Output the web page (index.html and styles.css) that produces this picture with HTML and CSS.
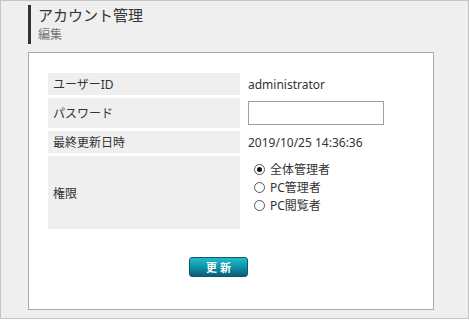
FILE: index.html
```html
<!DOCTYPE html>
<html lang="ja">
<head>
  <meta charset="UTF-8" />
  <meta name="viewport" content="width=device-width, initial-scale=1.0" />
  <title>アカウント管理</title>
  <link rel="stylesheet" href="styles.css">
</head>
<body>
  <div class="frame">
    <div class="page-head">
      <div class="page-title">アカウント管理</div>
      <div class="page-sub">編集</div>
    </div>

    <div class="panel">
      <form class="account-form" onsubmit="return false;">
        <div class="form-grid">
          <div class="label h-sm">ユーザーID</div>
          <div class="value">administrator</div>

          <div class="label h-md">パスワード</div>
          <div class="value"><input type="password" class="text-input"></div>

          <div class="label h-sm">最終更新日時</div>
          <div class="value">2019/10/25 14:36:36</div>

          <div class="label h-lg">権限</div>
          <div class="value radios">
            <label class="radio"><input type="radio" name="role" checked> 全体管理者</label>
            <label class="radio"><input type="radio" name="role"> PC管理者</label>
            <label class="radio"><input type="radio" name="role"> PC閲覧者</label>
          </div>
        </div>
        <div class="actions">
          <button class="btn-update" type="submit">更新</button>
        </div>
      </form>
    </div>
  </div>
</body>
</html>
```

FILE: styles.css
```css
body {
  margin: 0;
  font-family: "Noto Sans", "Noto Sans CJK JP", sans-serif;
  font-size: 12px;
  color: #333;
  background: #fff;
}
.frame {
  width: 469px;
  height: 319px;
  box-sizing: border-box;
  border: 1px solid #c4c4c4;
  background: #efefef;
  padding: 4px 0 0 27px;
}
.page-head {
  border-left: 3px solid #333;
  padding-left: 7px;
  height: 39px;
}
.page-title {
  font-size: 15px;
  line-height: 21px;
  color: #333;
}
.page-sub {
  font-size: 12px;
  line-height: 18px;
  color: #777;
}
.panel {
  margin-top: 8px;
  width: 406px;
  height: 258px;
  box-sizing: border-box;
  border: 1px solid #aaa;
  background: #fff;
  padding: 20px 0 0 19px;
}
.account-form {
  width: 337px;
}
.form-grid {
  display: grid;
  grid-template-columns: 192px 1fr;
  column-gap: 8px;
  row-gap: 3px;
}
.label {
  background: #efefef;
  display: flex;
  align-items: center;
  padding-left: 5px;
  color: #333;
}
.h-sm { height: 22px; }
.h-md { height: 30px; }
.h-lg { height: 73px; }
.value {
  display: flex;
  align-items: center;
}
.text-input {
  width: 136px;
  height: 24px;
  box-sizing: border-box;
  border: 1px solid #a0a0a0;
  padding: 2px 4px;
  margin: 0;
}
.radios {
  flex-direction: column;
  align-items: flex-start;
  justify-content: flex-start;
  padding-top: 4px;
}
.radio {
  display: flex;
  align-items: center;
  gap: 5px;
  height: 18px;
  padding-left: 6px;
}
.radio input {
  appearance: none;
  width: 11px;
  height: 11px;
  margin: 0;
  border: 1px solid #555;
  border-radius: 50%;
  background: #fff;
  position: relative;
}
.radio input:checked::after {
  content: "";
  position: absolute;
  left: 2px;
  top: 2px;
  width: 5px;
  height: 5px;
  border-radius: 50%;
  background: #111;
}
.actions {
  display: flex;
  justify-content: center;
  margin-top: 28px;
  padding-left: 4px;
}
.btn-update {
  width: 59px;
  height: 20px;
  border: 1px solid #0b5a6c;
  border-radius: 3px;
  background: linear-gradient(to bottom, #22bccb, #0f93a8 50%, #0a5d73);
  color: #fff;
  font-family: "Noto Sans CJK JP", sans-serif;
  font-weight: bold;
  font-size: 11px;
  letter-spacing: 3px;
  text-indent: 3px;
  padding: 0;
  cursor: pointer;
}
```
